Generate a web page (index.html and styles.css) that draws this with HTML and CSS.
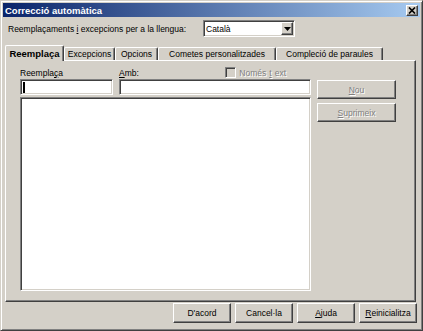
FILE: index.html
```html
<!DOCTYPE html>
<html lang="ca">
<head>
  <meta charset="UTF-8">
  <meta name="viewport" content="width=device-width, initial-scale=1.0">
  <title>Correcció automàtica</title>
  <link rel="stylesheet" href="styles.css">
</head>
<body>
  <div class="window">
    <!-- Barra de títol -->
    <div class="titlebar">
      <span class="title">Correcció automàtica</span>
      <span class="close">
        <svg width="8" height="7" viewBox="0 0 8 7">
          <path d="M1 0.5 L7 6.5 M7 0.5 L1 6.5" stroke="#000" stroke-width="1.7" fill="none"/>
        </svg>
      </span>
    </div>

    <!-- Llengua -->
    <div class="lang-row">
      <span>Reemplaçaments <u>i</u> excepcions per a la llengua:</span>
      <div class="combo">
        <span class="combo-value">Català</span>
        <span class="combo-arrow">
          <svg width="7" height="4" viewBox="0 0 7 4"><path d="M0 0 H7 L3.5 4 Z" fill="#000"/></svg>
        </span>
      </div>
    </div>

    <!-- Pestanyes -->
    <div class="tabs">
      <div class="tab active tab-replace">Reemplaça</div>
      <div class="tab tab-except">Excepcions</div>
      <div class="tab tab-options">Opcions</div>
      <div class="tab tab-quotes">Cometes personalitzades</div>
      <div class="tab tab-words">Compleció de paraules</div>
    </div>

    <div class="panel">
      <div class="field-label replace-label">Reempla<u>ç</u>a</div>
      <div class="field-label with-label">
        <span><u>A</u>mb:</span>
        <span class="only-text"><span class="checkbox"></span>Només <u>t</u>ext</span>
      </div>
      <div class="textbox replace-box"><span class="caret"></span></div>
      <div class="textbox with-box"></div>
      <div class="side">
        <div class="btn disabled"><span><u>N</u>ou</span></div>
        <div class="btn disabled"><span><u>S</u>uprimeix</span></div>
      </div>
      <div class="listbox"></div>
    </div>

    <div class="footer">
      <div class="btn">D'acord</div>
      <div class="btn">Cancel·la</div>
      <div class="btn"><span><u>A</u>juda</span></div>
      <div class="btn"><span><u>R</u>einicialitza</span></div>
    </div>
  </div>
</body>
</html>
```

FILE: styles.css
```css
* {
  margin: 0;
  padding: 0;
  box-sizing: border-box;
}

body {
  font-family: "Liberation Sans", Arial, sans-serif;
  font-size: 8.5px;
  color: #000;
  background-color: #d4d0c8;
}

u {
  text-underline-offset: 1px;
}

.window {
  width: 423px;
  height: 331px;
  background-color: #d4d0c8;
  border: 1px solid;
  border-color: #d4d0c8 #404040 #404040 #d4d0c8;
  box-shadow: inset 1px 1px #fff, inset -1px -1px #808080;
  padding: 2px;
}

.titlebar {
  height: 14px;
  display: flex;
  align-items: center;
  justify-content: space-between;
  padding: 0 2px 0 2px;
  background: linear-gradient(to right, #0a246a, #a6caf0);
  color: white;
  font-weight: bold;
  font-size: 9.5px;
}

.close {
  width: 12px;
  height: 11px;
  background-color: #d4d0c8;
  border: 1px solid;
  border-color: #fff #404040 #404040 #fff;
  box-shadow: inset -1px -1px #808080;
  display: flex;
  align-items: center;
  justify-content: center;
}

.lang-row {
  display: grid;
  grid-template-columns: 195px 92px;
  align-items: center;
  height: 20px;
  padding: 3px 0 0 5px;
}

.combo {
  height: 17px;
  display: flex;
  align-items: stretch;
  padding: 1px;
  background-color: white;
  border: 1px solid;
  border-color: #808080 #fff #fff #808080;
  box-shadow: inset 1px 1px #404040, inset -1px -1px #d4d0c8;
}

.combo-value {
  flex: 1;
  display: flex;
  align-items: center;
  padding-left: 1px;
}

.combo-arrow {
  width: 12px;
  background-color: #d4d0c8;
  border: 1px solid;
  border-color: #fff #404040 #404040 #fff;
  box-shadow: inset -1px -1px #808080;
  display: flex;
  align-items: center;
  justify-content: center;
}

.tabs {
  display: flex;
  align-items: flex-end;
  height: 15px;
  margin: 8px 0 0 2px;
}

.tab {
  height: 13px;
  border: 1px solid #fff;
  border-bottom: 0;
  border-right-color: #404040;
  border-radius: 2px 2px 0 0;
  box-shadow: inset -1px 0 #808080;
  display: flex;
  align-items: center;
  justify-content: center;
}

.tab.active {
  height: 16px;
  margin-bottom: -1px;
  position: relative;
  z-index: 1;
  background-color: #d4d0c8;
  font-weight: bold;
  font-size: 9.5px;
}

.tab-replace { width: 59px; }
.tab-except { width: 51px; }
.tab-options { width: 43px; }
.tab-quotes { width: 118px; }
.tab-words { width: 107px; }

.panel {
  width: 411px;
  height: 242px;
  margin-left: 2px;
  border: 1px solid;
  border-color: #fff #404040 #404040 #fff;
  box-shadow: inset -1px -1px #808080;
  padding: 5px 0 10px 14px;
  display: grid;
  grid-template-columns: 93px 192px 79px;
  grid-template-rows: 13px 16px 1fr;
  column-gap: 6px;
  grid-template-areas:
    "l1 l2 ."
    "t1 t2 side"
    "list list side";
}

.field-label {
  display: flex;
  align-items: center;
}

.replace-label { grid-area: l1; }
.with-label { grid-area: l2; }
.replace-box { grid-area: t1; }
.with-box { grid-area: t2; }

.only-text {
  margin-left: auto;
  margin-right: 25px;
  display: flex;
  align-items: center;
  gap: 3px;
  color: #808080;
  text-shadow: 1px 1px #fff;
}

.checkbox {
  width: 11px;
  height: 11px;
  background-color: #d4d0c8;
  border: 1px solid;
  border-color: #808080 #fff #fff #808080;
  box-shadow: inset 1px 1px #404040, inset -1px -1px #d4d0c8;
}

.textbox,
.listbox {
  background-color: white;
  border: 1px solid;
  border-color: #808080 #fff #fff #808080;
  box-shadow: inset 1px 1px #404040, inset -1px -1px #d4d0c8;
}

.textbox {
  display: flex;
  align-items: center;
}

.caret {
  width: 2px;
  height: 11px;
  margin-left: 2px;
  background-color: #000;
}

.listbox {
  grid-area: list;
  margin-top: 2px;
}

.side {
  grid-area: side;
  display: flex;
  flex-direction: column;
  gap: 4px;
  padding-top: 1px;
}

.btn {
  height: 19px;
  background-color: #d4d0c8;
  border: 1px solid;
  border-color: #fff #404040 #404040 #fff;
  box-shadow: inset -1px -1px #808080;
  display: flex;
  align-items: center;
  justify-content: center;
}

.btn.disabled {
  color: #808080;
  text-shadow: 1px 1px #fff;
}

.footer {
  display: flex;
  justify-content: flex-end;
  gap: 4px;
  margin-top: 1px;
  padding-right: 3px;
}

.footer .btn {
  width: 58px;
  height: 20px;
}
```
